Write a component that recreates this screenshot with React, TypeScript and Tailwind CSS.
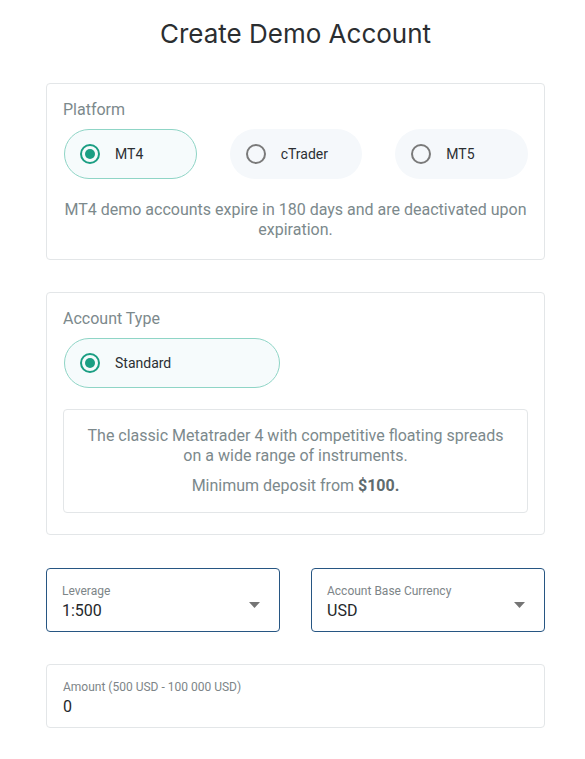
import { ReactNode } from "react";

const font = { fontFamily: "Roboto, 'Noto Sans', sans-serif" };

function Radio({ checked }: { checked: boolean }) {
  return (
    <span
      className={`flex h-[20px] w-[20px] shrink-0 items-center justify-center rounded-full border-2 ${
        checked ? "border-[#1b9e83]" : "border-[#7a7a7a]"
      }`}
    >
      {checked && <span className="h-[10px] w-[10px] rounded-full bg-[#1b9e83]" />}
    </span>
  );
}

function Pill({
  label,
  checked,
  width,
}: {
  label: string;
  checked: boolean;
  width: string;
}) {
  return (
    <div
      className={`flex h-[50px] items-center gap-[15px] rounded-full pl-[15px] ${width} ${
        checked
          ? "border border-[#8fd5c6] bg-[#f6fbfc]"
          : "border border-transparent bg-[#f5f8fb]"
      }`}
    >
      <Radio checked={checked} />
      <span className="text-[14px] text-[#2b2f33]">{label}</span>
    </div>
  );
}

function Card({ title, children }: { title: string; children: ReactNode }) {
  return (
    <div className="rounded-[4px] border border-[#e3e6e8] bg-white px-[16px] pb-[19px] pt-[16px]">
      <div className="text-[16px] leading-[20px] text-[#7c898c]">{title}</div>
      {children}
    </div>
  );
}

function Caret() {
  return (
    <svg width="11" height="6" viewBox="0 0 11 6" className="mt-[9px] shrink-0">
      <path d="M0 0 L11 0 L5.5 6 Z" fill="#757575" />
    </svg>
  );
}

function SelectField({ label, value }: { label: string; value: string }) {
  return (
    <div className="flex h-[64px] flex-1 items-center rounded-[4px] border border-[#275683] bg-white pl-[15px] pr-[19px]">
      <div className="flex flex-1 flex-col pt-[5px]">
        <span className="text-[12px] leading-[14px] text-[#7d8588]">{label}</span>
        <span className="mt-[2px] text-[16px] leading-[22px] text-[#24282b]">{value}</span>
      </div>
      <Caret />
    </div>
  );
}

export default function App() {
  return (
    <div className="min-h-[759px] w-[585px] bg-white" style={font}>
      <div className="pl-[46px] pr-[40px] pb-[30px]">
        <h1
          className="pt-[17px] pb-[32px] text-center text-[26px] leading-[34px] text-[#2b2e31]"
          style={{ fontFamily: "Inter, 'Noto Sans', sans-serif" }}
        >
          Create Demo Account
        </h1>

        <Card title="Platform">
          <div className="mt-[9px] flex gap-[33px] pl-[1px]">
            <Pill label="MT4" checked width="w-[133px]" />
            <Pill label="cTrader" checked={false} width="w-[133px]" />
            <Pill label="MT5" checked={false} width="w-[133px]" />
          </div>
          <p className="mt-[21px] text-center text-[16px] leading-[20px] text-[#7c898c]">
            MT4 demo accounts expire in 180 days and are deactivated upon
            expiration.
          </p>
        </Card>

        <div className="mt-[32px]">
          <div className="rounded-[4px] border border-[#e3e6e8] bg-white px-[16px] pb-[21px] pt-[16px]">
            <div className="text-[16px] leading-[20px] text-[#7c898c]">Account Type</div>
            <div className="mt-[9px] pl-[1px]">
              <Pill label="Standard" checked width="w-[216px]" />
            </div>
            <div className="mt-[21px] rounded-[4px] border border-[#e3e6e8] px-[16px] pb-[16px] pt-[16px] text-center text-[16px] leading-[20px] text-[#7c898c]">
              <p>
                The classic Metatrader 4 with competitive floating spreads
                <br />
                on a wide range of instruments.
              </p>
              <p className="mt-[10px]">
                Minimum deposit from{" "}
                <span className="font-bold text-[#5f6b6e]">$100.</span>
              </p>
            </div>
          </div>
        </div>

        <div className="mt-[33px] flex gap-[31px]">
          <SelectField label="Leverage" value="1:500" />
          <SelectField label="Account Base Currency" value="USD" />
        </div>

        <div className="mt-[32px] flex h-[64px] flex-col justify-center rounded-[4px] border border-[#e3e6e8] bg-white pl-[16px] pt-[5px]">
          <span className="text-[12px] leading-[14px] text-[#7d8588]">
            Amount (500 USD - 100 000 USD)
          </span>
          <span className="mt-[2px] text-[16px] leading-[22px] text-[#24282b]">0</span>
        </div>
      </div>
    </div>
  );
}
